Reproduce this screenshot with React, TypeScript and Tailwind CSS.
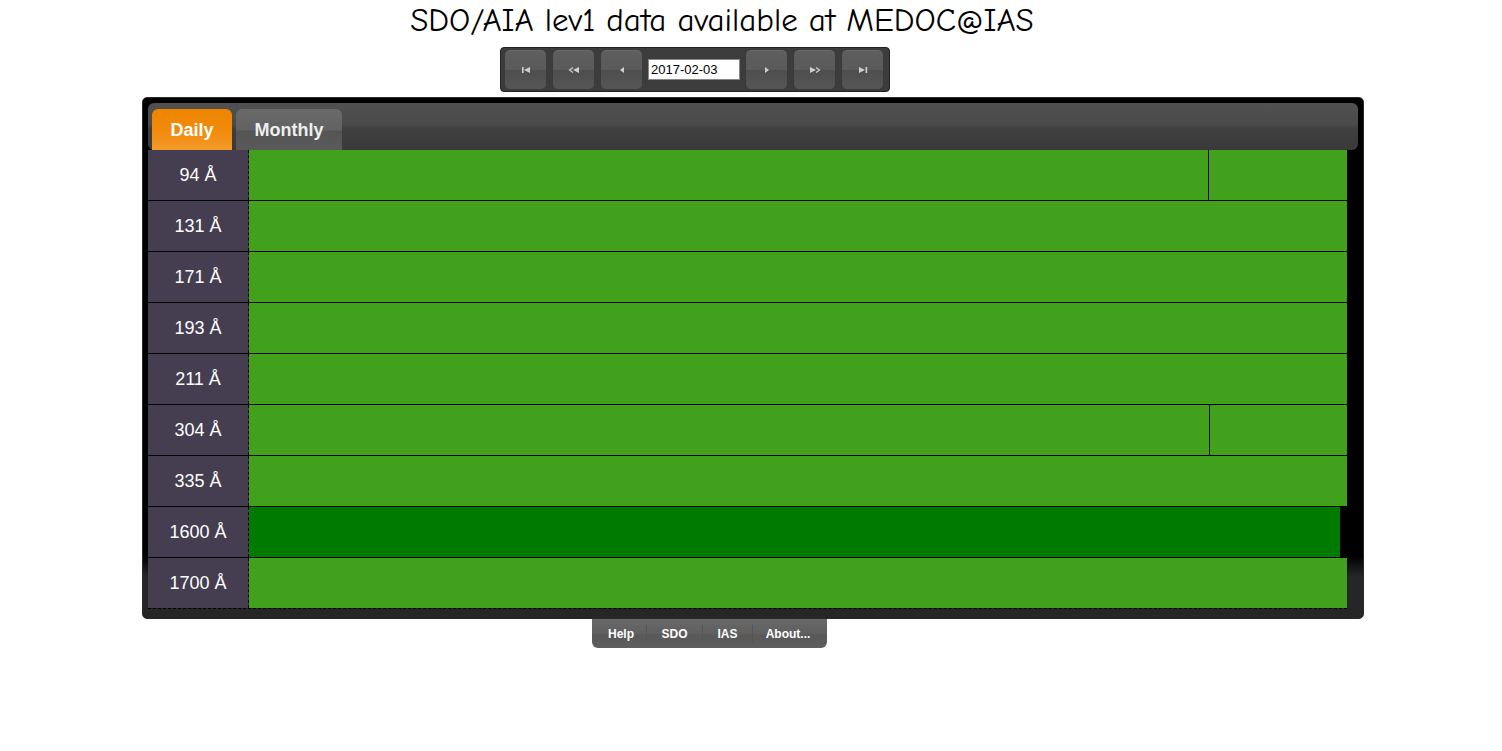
import React from "react";

const rows: { label: string; kind: "split" | "full" | "dark"; split?: number }[] = [
  { label: "94 Å", kind: "split", split: 960 },
  { label: "131 Å", kind: "full" },
  { label: "171 Å", kind: "full" },
  { label: "193 Å", kind: "full" },
  { label: "211 Å", kind: "full" },
  { label: "304 Å", kind: "split", split: 961 },
  { label: "335 Å", kind: "full" },
  { label: "1600 Å", kind: "dark" },
  { label: "1700 Å", kind: "full" },
];

function Icon({ type }: { type: string }) {
  const c = "#cfcfcf";
  return (
    <svg width="14" height="10" viewBox="0 0 14 10">
      {type === "first" && (
        <>
          <rect x="3" y="2" width="1.6" height="6" fill={c} />
          <polygon points="5,5 11,2 11,8" fill={c} />
        </>
      )}
      {type === "prev2" && (
        <>
          <polyline points="6,2.5 2.5,5 6,7.5" fill="none" stroke={c} strokeWidth="1.2" />
          <polygon points="6,5 12,2 12,8" fill={c} />
        </>
      )}
      {type === "prev" && <polygon points="5,5 9,2 9,8" fill={c} />}
      {type === "next" && <polygon points="9,5 5,2 5,8" fill={c} />}
      {type === "next2" && (
        <>
          <polygon points="8,5 2,2 2,8" fill={c} />
          <polyline points="8,2.5 11.5,5 8,7.5" fill="none" stroke={c} strokeWidth="1.2" />
        </>
      )}
      {type === "last" && (
        <>
          <polygon points="9,5 3,2 3,8" fill={c} />
          <rect x="9.6" y="2" width="1.6" height="6" fill={c} />
        </>
      )}
    </svg>
  );
}

function NavButton({ type }: { type: string }) {
  return (
    <button className="w-[43px] h-[41px] rounded-[6px] flex items-center justify-center bg-[linear-gradient(to_bottom,#5e5e5e_0%,#5a5a5a_50%,#4e4e4e_52%,#565656_100%)] border border-[#3a3a3a] shadow-[inset_0_1px_0_#6a6a6a]">
      <Icon type={type} />
    </button>
  );
}

export default function App() {
  return (
    <div className="w-[1502px] h-[751px] bg-white" style={{ fontFamily: '"Liberation Sans", Arial, sans-serif' }}>
      <div
        className="w-[1444px] text-center text-[33px] leading-[40px] text-black"
        style={{ fontFamily: '"Comic Sans MS", "Comic Neue", "DejaVu Sans", cursive' }}
      >
        SDO/AIA lev1 data available at MEDOC@IAS
      </div>

      <div className="ml-[500px] mt-[7px] w-[390px] h-[45px] rounded-[4px] bg-[#3c3c3c] border border-[#222] flex items-center pl-[3px] gap-[5px]">
        <NavButton type="first" />
        <NavButton type="prev2" />
        <NavButton type="prev" />
        <input
          readOnly
          value="2017-02-03"
          className="w-[92px] h-[21px] bg-white border border-[#888] text-[13px] text-black px-[2px] outline-none"
          style={{ fontFamily: '"Liberation Sans", Arial, sans-serif' }}
        />
        <NavButton type="next" />
        <NavButton type="next2" />
        <NavButton type="last" />
      </div>

      <div className="ml-[142px] mt-[5px] w-[1222px] h-[522px] rounded-[5px] border border-[#2a2a2a] p-[5px] bg-[linear-gradient(to_bottom,#000_88%,#262626_92%,#262626_100%)]">
        <div className="h-[47px] rounded-[6px] bg-[linear-gradient(to_bottom,#505050_0%,#4a4a4a_45%,#3f3f3f_55%,#3a3a3a_100%)] flex items-end pl-[4px] gap-[4px]">
          <div className="w-[80px] h-[41px] rounded-t-[6px] bg-[linear-gradient(to_bottom,#ef8500_0%,#f08a0a_50%,#f49a2a_100%)] flex items-center justify-center text-white font-bold text-[18px] pt-[2px]">
            Daily
          </div>
          <div className="w-[106px] h-[41px] rounded-t-[6px] bg-[linear-gradient(to_bottom,#6a6a6a_0%,#626262_50%,#555555_55%,#5a5a5a_100%)] flex items-center justify-center text-[#eeeeee] font-bold text-[18px] pt-[2px]">
            Monthly
          </div>
        </div>
        <div className="w-[1199px]">
          {rows.map((r, i) => (
            <div
              key={r.label}
              className={`flex h-[51px] ${i < rows.length - 1 ? "border-b border-black" : "border-b border-dashed border-black"}`}
            >
              <div className="w-[101px] shrink-0 bg-[#453e51] border-r border-dashed border-black flex items-center justify-center text-white text-[18px]">
                {r.label}
              </div>
              {r.kind === "split" && (
                <div className="flex-1 flex bg-[#42a11c]">
                  <div style={{ width: r.split }} className="h-full border-r border-black" />
                  <div className="flex-1" />
                </div>
              )}
              {r.kind === "full" && <div className="flex-1 bg-[#42a11c]" />}
              {r.kind === "dark" && (
                <div className="flex-1 flex bg-black">
                  <div className="w-[1091px] bg-[#007a00]" />
                </div>
              )}
            </div>
          ))}
        </div>
      </div>

      <div className="ml-[592px] w-[235px] h-[29px] rounded-b-[6px] bg-[linear-gradient(to_bottom,#686868_0%,#606060_50%,#585858_55%,#5e5e5e_100%)] flex items-center text-white font-bold text-[12px] px-[4px]">
        <div className="w-[51px] text-center border-r border-[#555]">Help</div>
        <div className="w-[56px] text-center border-r border-[#555]">SDO</div>
        <div className="w-[50px] text-center border-r border-[#555]">IAS</div>
        <div className="w-[70px] text-center">About...</div>
      </div>
    </div>
  );
}
